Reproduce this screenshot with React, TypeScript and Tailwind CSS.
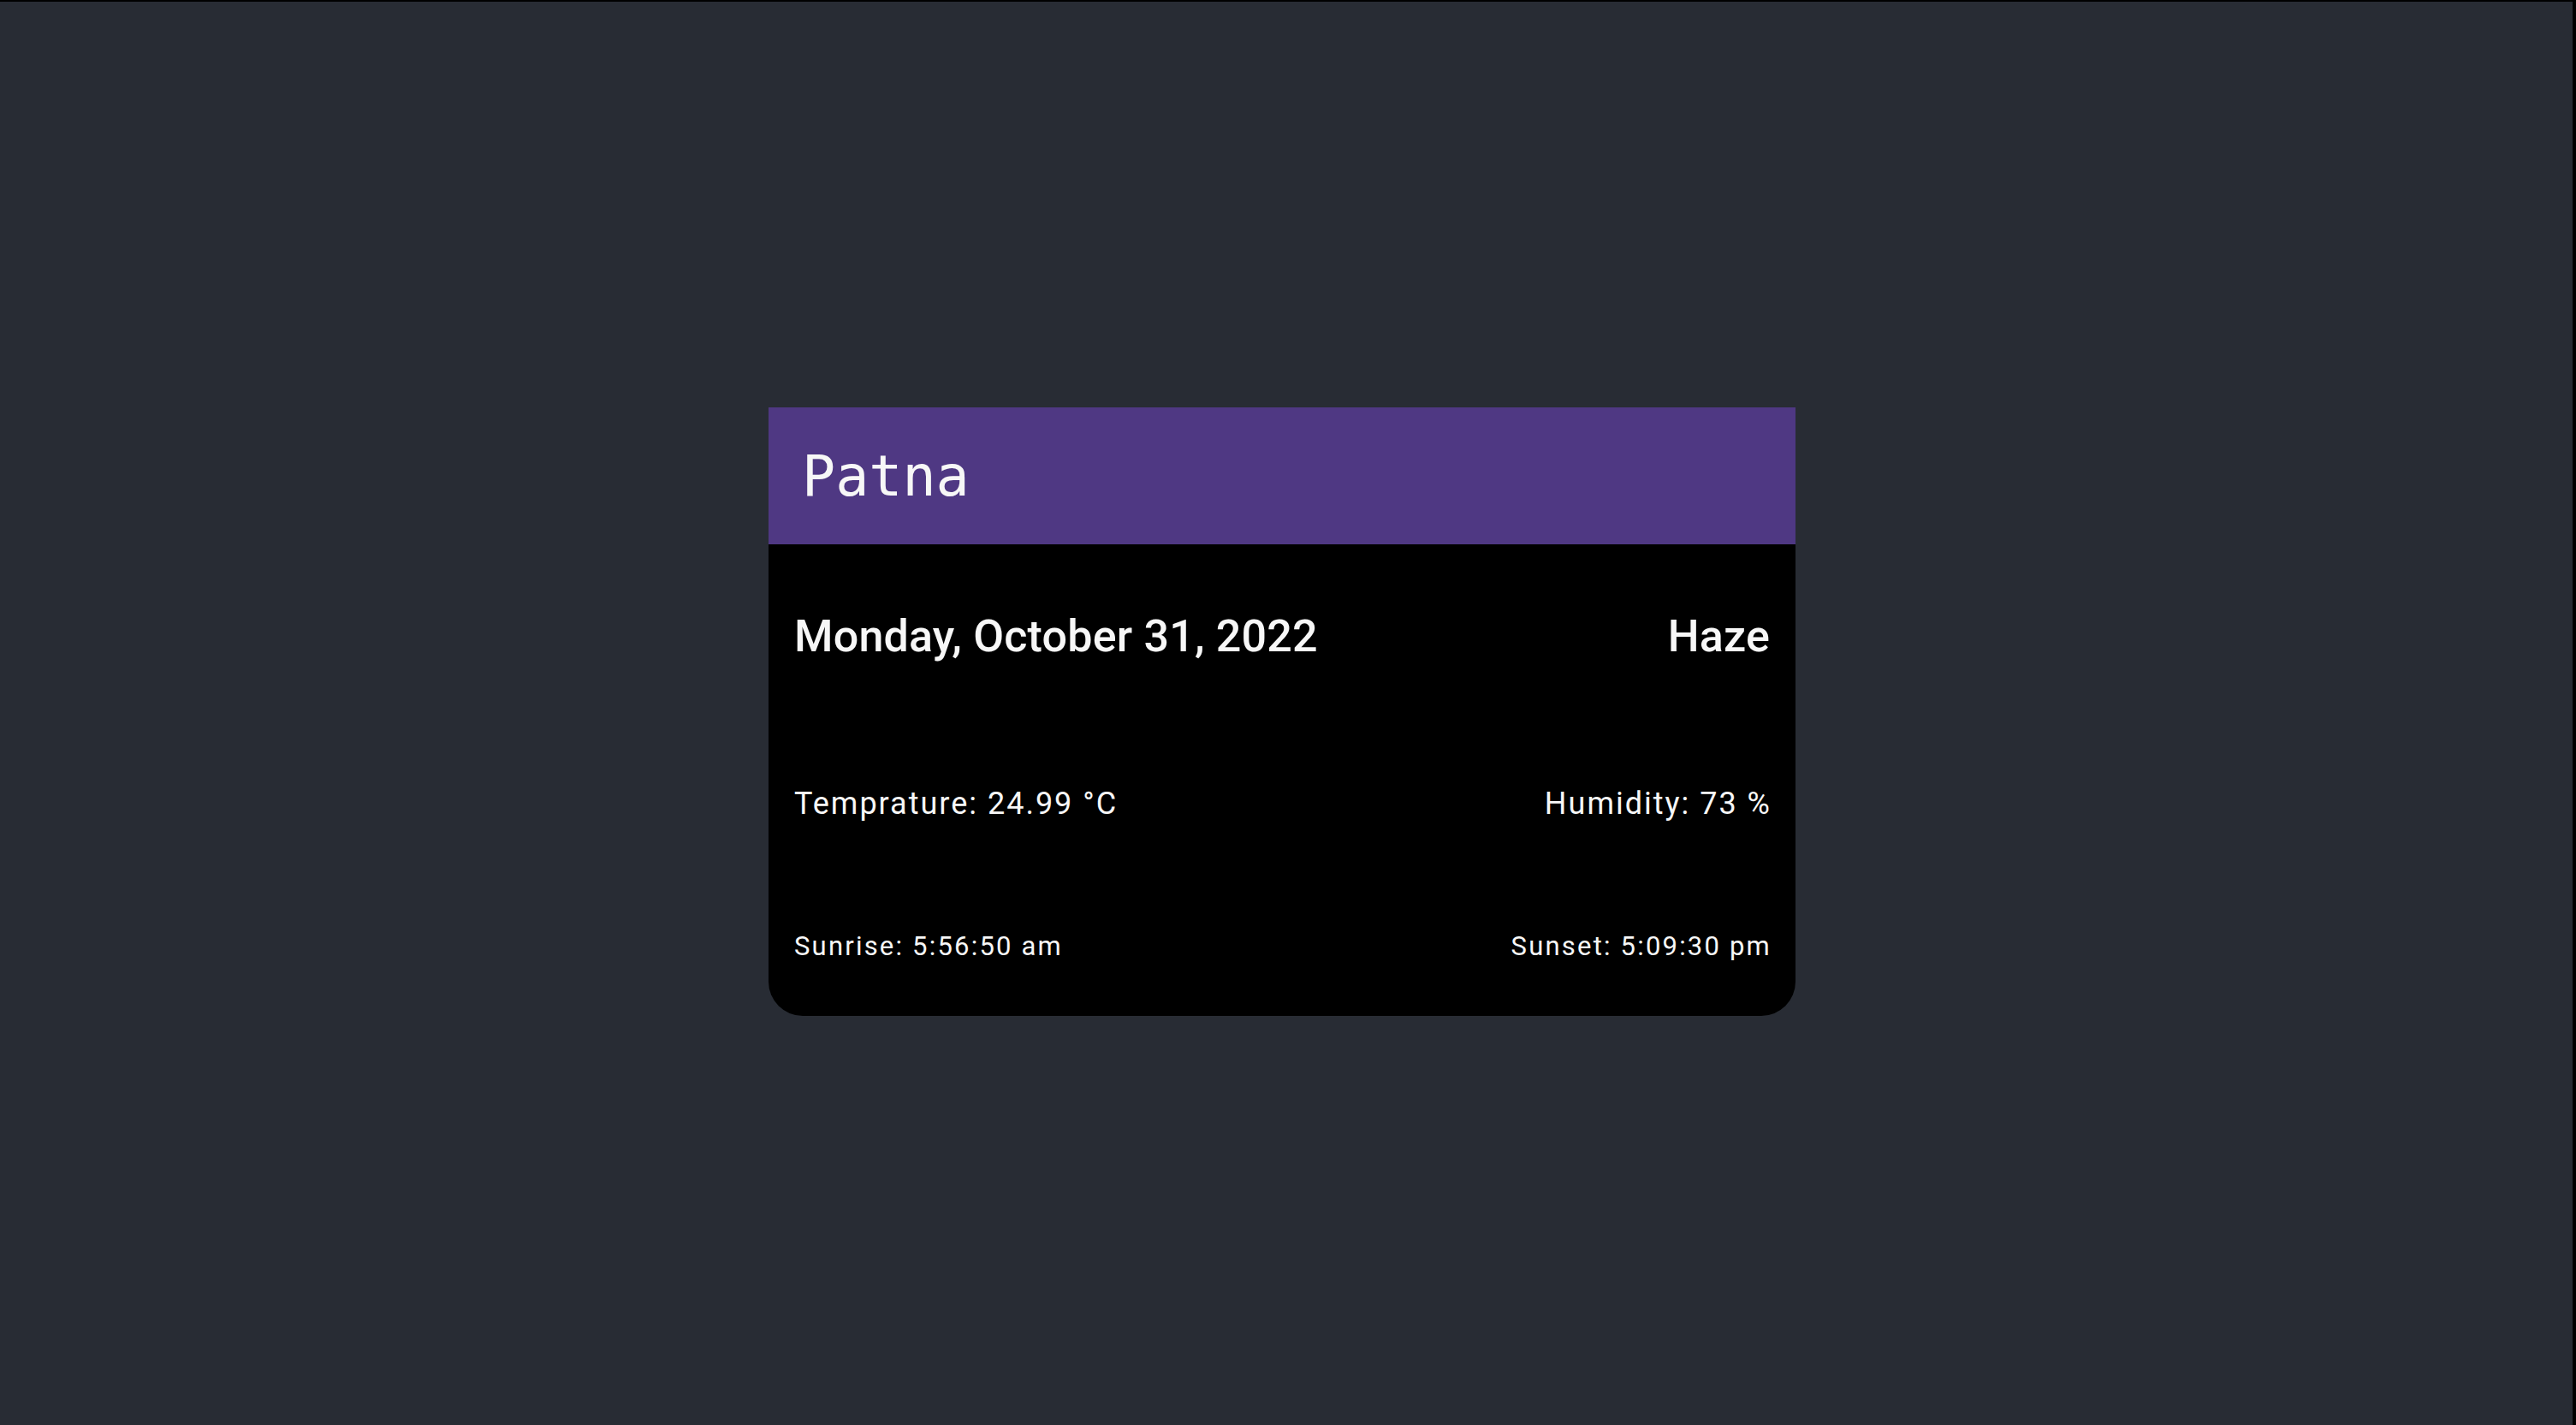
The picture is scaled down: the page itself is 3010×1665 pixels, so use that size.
export default function App() {
  return (
    <div className="h-[1665px] w-full bg-[#282c34] border-t-2 border-r-4 border-black flex items-center justify-center pr-[10px] pb-[4px] font-['Roboto',sans-serif] text-[#f7f7f7]">
      <div className="w-[1200px] h-[711px] bg-black rounded-b-[40px] flex flex-col">
        <div className="h-[160px] bg-[#4f3883] flex items-center pl-[39px]">
          <h1 className="text-[65px] leading-none font-['DejaVu_Sans_Mono',monospace]">Patna</h1>
        </div>
        <div className="flex-1 flex flex-col px-[30px] pt-[77px]">
          <div className="flex justify-between items-center h-[62px] text-[52px] font-medium tracking-[0.2px]">
            <span>Monday, October 31, 2022</span>
            <span>Haze</span>
          </div>
          <div className="flex justify-between items-center h-[43px] mt-[142px] text-[36px] tracking-[2px]">
            <span>Temprature: 24.99 °C</span>
            <span className="-mr-[2px]">Humidity: 73 %</span>
          </div>
          <div className="flex justify-between items-center h-[37px] mt-[128px] text-[31px] tracking-[2.2px]">
            <span>Sunrise: 5:56:50 am</span>
            <span className="-mr-[2px]">Sunset: 5:09:30 pm</span>
          </div>
        </div>
      </div>
    </div>
  )
}
